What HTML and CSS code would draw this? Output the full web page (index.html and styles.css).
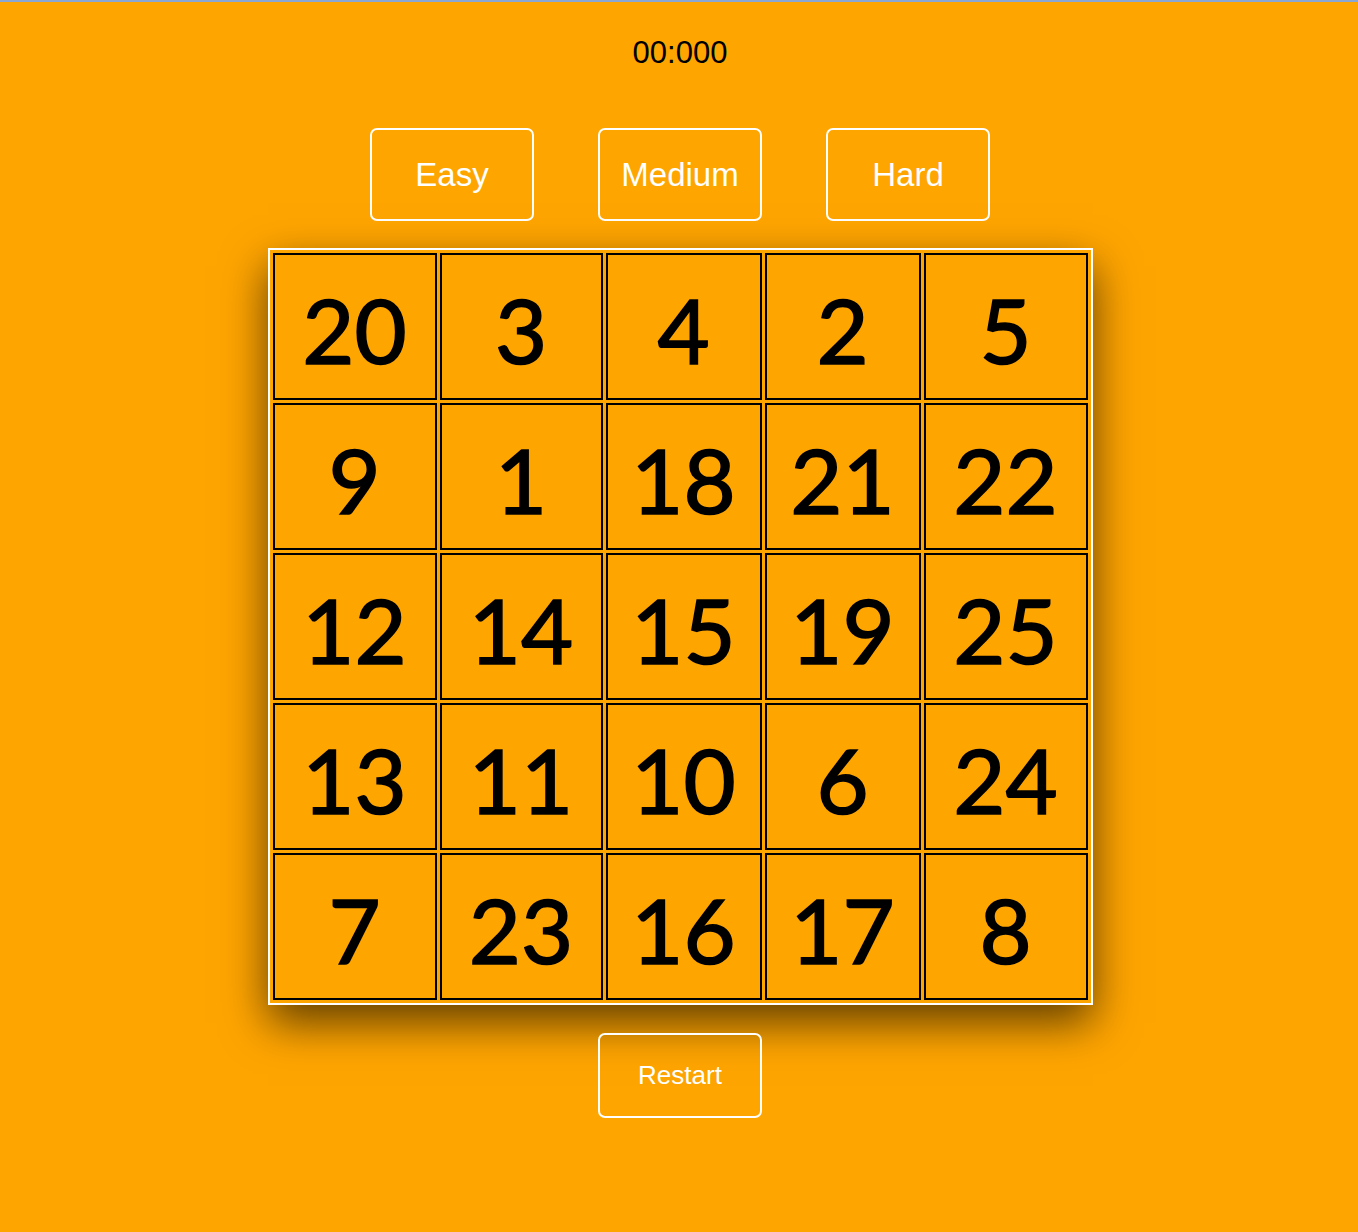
FILE: index.html
```html
<!DOCTYPE html>
<html>
<head>
<meta charset="utf-8">
<link rel="stylesheet" href="styles.css">
</head>
<body>
<div class="topline"></div>
<main class="app">
  <div class="timer">00:000</div>
  <div class="levels">
    <button class="btn level">Easy</button>
    <button class="btn level">Medium</button>
    <button class="btn level">Hard</button>
  </div>
  <table class="board">
    <colgroup>
      <col class="c1"><col class="c2"><col class="c3"><col class="c4"><col class="c5">
    </colgroup>
    <tr><td>20</td><td>3</td><td>4</td><td>2</td><td>5</td></tr>
    <tr><td>9</td><td>1</td><td>18</td><td>21</td><td>22</td></tr>
    <tr><td>12</td><td>14</td><td>15</td><td>19</td><td>25</td></tr>
    <tr><td>13</td><td>11</td><td>10</td><td>6</td><td>24</td></tr>
    <tr><td>7</td><td>23</td><td>16</td><td>17</td><td>8</td></tr>
  </table>
  <button class="btn restart">Restart</button>
</main>
</body>
</html>
```
FILE: styles.css
```css
html, body {
  margin: 0;
  padding: 0;
}
body {
  background: #ffa500;
  min-height: 1232px;
  font-family: "Liberation Sans", Arial, sans-serif;
}
.topline {
  height: 2px;
  background: #8aa6d2;
}
.app {
  display: flex;
  flex-direction: column;
  align-items: center;
}
.timer {
  margin-top: 33px;
  font-size: 31px;
  line-height: 36px;
  color: #000;
  padding-left: 2px;
}
.levels {
  display: flex;
  gap: 64px;
  margin-top: 57px;
  padding-left: 2px;
}
.btn {
  background: transparent;
  border: 2px solid #fff;
  border-radius: 7px;
  color: #fff;
  font-family: "Liberation Sans", Arial, sans-serif;
  padding: 0;
  cursor: pointer;
}
.level {
  width: 164px;
  height: 93px;
  font-size: 33px;
}
.board {
  margin-top: 27px;
  border-collapse: separate;
  border-spacing: 3px;
  border: 2px solid #fff;
  box-shadow: 0 18px 42px rgba(0, 0, 0, 0.62);
  table-layout: fixed;
  width: 825px;
  margin-left: 2px;
}
.c1 { width: 164px; }
.c2 { width: 163px; }
.c3 { width: 156px; }
.c4 { width: 156px; }
.c5 { width: 164px; }
.board td {
  border: 2px solid #000;
  height: 147px;
  padding: 4px 0 0;
  text-align: center;
  vertical-align: middle;
  font-family: "Comic Sans MS", "Lato", "DejaVu Sans", sans-serif;
  font-weight: 400;
  font-size: 90px;
  line-height: 1;
  color: #000;
  -webkit-text-stroke: 1.6px #000;
  box-sizing: border-box;
}
.restart {
  margin-top: 28px;
  width: 164px;
  height: 85px;
  font-size: 26px;
  margin-left: 2px;
}
```
